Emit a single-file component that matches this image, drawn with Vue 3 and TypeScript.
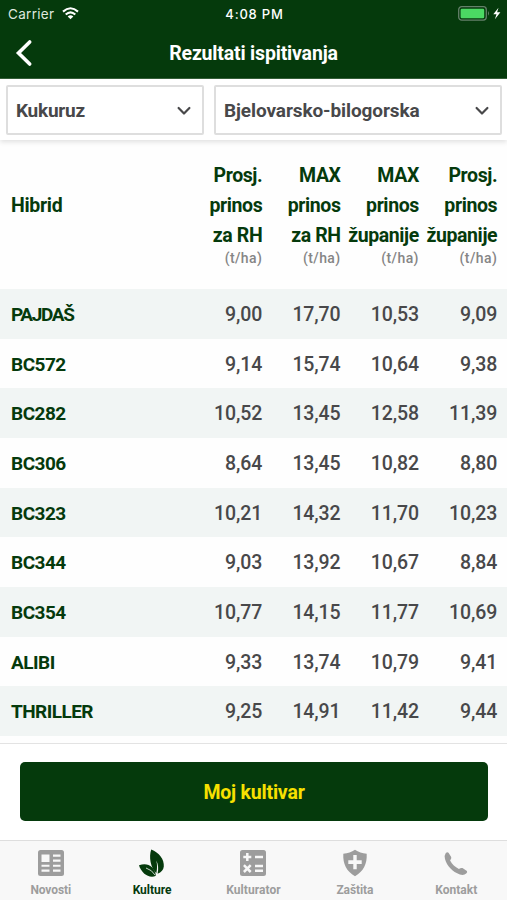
<script setup lang="ts">
interface Column { lines: string[] }
interface Row { name: string; values: string[]; spacing: number }
interface Tab { label: string; icon: string; spacing: number }

const columns: Column[] = [
  { lines: ['Prosj.', 'prinos', 'za RH'] },
  { lines: ['MAX', 'prinos', 'za RH'] },
  { lines: ['MAX', 'prinos', 'županije'] },
  { lines: ['Prosj.', 'prinos', 'županije'] },
]

const rows: Row[] = [
  { name: 'PAJDAŠ', values: ['9,00', '17,70', '10,53', '9,09'], spacing: -1.35 },
  { name: 'BC572', values: ['9,14', '15,74', '10,64', '9,38'], spacing: -0.5 },
  { name: 'BC282', values: ['10,52', '13,45', '12,58', '11,39'], spacing: -0.5 },
  { name: 'BC306', values: ['8,64', '13,45', '10,82', '8,80'], spacing: -0.5 },
  { name: 'BC323', values: ['10,21', '14,32', '11,70', '10,23'], spacing: -0.5 },
  { name: 'BC344', values: ['9,03', '13,92', '10,67', '8,84'], spacing: -0.5 },
  { name: 'BC354', values: ['10,77', '14,15', '11,77', '10,69'], spacing: -0.5 },
  { name: 'ALIBI', values: ['9,33', '13,74', '10,79', '9,41'], spacing: -0.5 },
  { name: 'THRILLER', values: ['9,25', '14,91', '11,42', '9,44'], spacing: -0.55 },
]

const tabs: Tab[] = [
  { label: 'Novosti', icon: 'news', spacing: -0.1 },
  { label: 'Kulture', icon: 'leaf', spacing: 0 },
  { label: 'Kulturator', icon: 'calc', spacing: 0.05 },
  { label: 'Zaštita', icon: 'shield', spacing: -0.1 },
  { label: 'Kontakt', icon: 'phone', spacing: 0 },
]
</script>

<template>
  <div class="app">
    <header class="top">
      <div class="status">
        <div class="carrier">
          <span>Carrier</span>
          <svg width="17" height="13" viewBox="0 0 17 13">
            <g fill="none" stroke="#fff" stroke-width="2.1">
              <path d="M1 4.600Q8.500 -2.100 16 4.600" />
              <path d="M3.700 7.500Q8.500 3.100 13.300 7.500" />
            </g>
            <path d="M5.700 9.400Q8.500 7.100 11.300 9.400L8.500 12.300z" fill="#fff" />
          </svg>
        </div>
        <span class="clock">4:08 PM</span>
        <svg class="battery" width="43" height="15" viewBox="0 0 43 15">
          <rect x=".7" y=".7" width="27.600" height="13.400" rx="3" fill="none" stroke="#64806a" stroke-width="1.300" />
          <rect x="2.600" y="2.700" width="23.600" height="9.500" rx="1.300" fill="#4bd963" />
          <path d="M30 5q2 2.400 0 4.800z" fill="#64806a" />
          <path d="M40.500 1.700L35.300 8.300h3.200L36.900 13.300l5.500-7h-3.300z" fill="#fff" />
        </svg>
      </div>
      <div class="nav">
        <svg class="back" width="18" height="28" viewBox="0 0 18 28">
          <path d="M14.700 3L3.500 14l11.200 11" fill="none" stroke="#fff" stroke-width="3.600" stroke-linecap="round" />
        </svg>
        <h1>Rezultati ispitivanja</h1>
      </div>
    </header>

    <div class="filters">
      <div class="select crop">
        <span>Kukuruz</span>
        <svg width="14" height="10" viewBox="0 0 14 10"><path d="M1.600 2l5.400 5.500L12.400 2" /></svg>
      </div>
      <div class="select county">
        <span>Bjelovarsko-bilogorska</span>
        <svg width="14" height="10" viewBox="0 0 14 10"><path d="M1.600 2l5.400 5.500L12.400 2" /></svg>
      </div>
    </div>

    <main class="table">
      <div class="head">
        <div class="hybrid">Hibrid</div>
        <div v-for="(c, i) in columns" :key="i" class="col">
          <span v-for="l in c.lines" :key="l">{{ l }}</span>
          <small>(t/ha)</small>
        </div>
      </div>
      <div v-for="r in rows" :key="r.name" class="row">
        <div class="name" :style="{ letterSpacing: r.spacing + 'px' }">{{ r.name }}</div>
        <div v-for="(v, i) in r.values" :key="i" class="value">{{ v }}</div>
      </div>
    </main>

    <section class="action">
      <button type="button">Moj kultivar</button>
    </section>

    <nav class="tabs">
      <div v-for="t in tabs" :key="t.label" class="tab" :class="{ active: t.icon === 'leaf' }">
        <svg v-if="t.icon === 'news'" width="28" height="28" viewBox="0 0 28 28">
          <rect x="1" y="1" width="26" height="26" rx="2.500" fill="currentColor" />
          <path d="M4.500 5.500h8v7.500h-8zM16 5.500h7.500v2.200H16zM16 10.500h7.500v2.200H16zM4.500 15.700h8v2.100h-8zM16 15.700h7.500v2.100H16zM4.500 20.600h8v2.100h-8zM16 20.600h7.500v2.100H16z" fill="#f8f8f8" />
        </svg>
        <svg v-else-if="t.icon === 'leaf'" width="28" height="28" viewBox="0 0 28 28">
          <path d="M13.200 .500C21 3.500 26.500 10.500 25.800 17.500Q25.300 22.500 19.600 24.800C20.700 19.500 20.300 15.500 18.300 11.500C19.400 16 19.300 20 18.300 24.200C12.500 18.500 10.700 8 13.200 .500z" fill="currentColor" />
          <path d="M1 16.200C9.500 13.200 16.500 17 18 26.800C11 29.800 3.500 24.500 1 16.200z" fill="currentColor" />
          <path d="M8 19Q14 20.800 17.300 26.300" fill="none" stroke="#f8f8f8" stroke-width=".8" />
        </svg>
        <svg v-else-if="t.icon === 'calc'" width="28" height="28" viewBox="0 0 28 28">
          <rect x="1" y="1" width="26" height="26" rx="2.500" fill="currentColor" />
          <g fill="none" stroke="#f8f8f8" stroke-width="2.500">
            <path d="M4.300 8h8M8.300 4v8M4.900 16.200l6.800 6.800M11.700 16.200l-6.800 6.800M16 8h8M16 17h8M16 21.700h8" />
          </g>
        </svg>
        <svg v-else-if="t.icon === 'shield'" width="28" height="28" viewBox="0 0 28 28">
          <path d="M14 .8Q19 4.300 25.700 4.800C26.200 15 22.500 22.500 14 27.200C5.500 22.500 1.800 15 2.300 4.800Q9 4.300 14 .8z" fill="currentColor" />
          <path d="M12.300 6h3.400v5.300h5v3.600h-5v5.300h-3.400v-5.300h-5v-3.600h5z" fill="#f8f8f8" />
        </svg>
        <svg v-else width="28" height="28" viewBox="0 0 28 28">
          <path d="M3.800 4Q5.300 2.600 6.500 3.700L9.200 8.100Q9.800 9.600 8.100 11.500C10.200 15.300 13 18 16.900 20Q18.800 18.500 20.500 19L24.900 21.900Q25.800 22.900 24.200 24.500Q22 26.600 17.900 25.500C10.500 22.700 4.800 17 3 10Q2.200 6 3.800 4z" fill="currentColor" />
        </svg>
        <span :style="{ letterSpacing: t.spacing + 'px' }">{{ t.label }}</span>
      </div>
    </nav>
  </div>
</template>

<style>
body { margin: 0; background: #fff; }
</style>

<style scoped>
* { box-sizing: border-box; }
.app { width: 507px; height: 900px; display: flex; flex-direction: column; background: #fefefe; font-family: Roboto, "Noto Sans", sans-serif; color: #48484a; overflow: hidden; }
.top { height: 79px; flex: none; background: #053a0c; color: #fff; border-bottom: 1px solid #36603a; }
.status { height: 27px; display: grid; grid-template-columns: 1fr auto 1fr; align-items: center; padding: 0 6px 0 8px; font-family: Inter, sans-serif; font-size: 13px; }
.carrier { display: flex; align-items: center; gap: 8px; font-size: 13.500px; color: #dfe8df; letter-spacing: .3px; }
.clock { font-weight: 500; letter-spacing: .8px; }
.battery { justify-self: end; }
.nav { height: 51px; display: grid; grid-template-columns: 60px 1fr 60px; align-items: center; }
.back { margin-left: 15px; }
h1 { margin: 1px 0 0; text-align: center; font-size: 19.500px; font-weight: 700; letter-spacing: -.18px; white-space: nowrap; }
.filters { flex: none; height: 61px; display: flex; gap: 10px; padding: 6px 5px 5px 6px; background: #fff; box-shadow: 0 2px 5px rgba(0, 0, 0, .12); }
.select { height: 50px; display: flex; align-items: center; justify-content: space-between; border: 2px solid #dedede; border-radius: 2px; padding: 0 11px 0 8px; font-size: 19px; font-weight: 700; }
.select svg { fill: none; stroke: #48484a; stroke-width: 2.200; stroke-linecap: round; stroke-linejoin: round; margin-top: 2px; }
.crop { width: 198px; letter-spacing: -.25px; }
.county { width: 288px; letter-spacing: -.1px; }
.table { flex: none; height: 596px; }
.head, .row { display: grid; grid-template-columns: 173px repeat(4, 78.300px); padding-left: 11px; }
.head { height: 149px; align-items: start; padding-top: 21px; color: #053a0c; font-size: 19.500px; font-weight: 700; }
.hybrid { line-height: 30px; padding-top: 30px; letter-spacing: -.3px; }
.col { display: flex; flex-direction: column; align-items: flex-end; line-height: 29.800px; white-space: nowrap; letter-spacing: -.4px; }
small { font-size: 14px; line-height: 17px; font-weight: 500; color: #858585; letter-spacing: .4px; }
.row { height: 49.670px; align-items: center; font-size: 19.500px; padding-top: 1.600px; }
.row:nth-child(even) { background: #f1f5f4; }
.name { font-size: 19px; font-weight: 700; color: #053a0c; }
.value { text-align: right; font-weight: 500; letter-spacing: -.1px; }
.action { flex: none; height: 97px; margin-top: 7px; border-top: 1px solid #e3e3e3; padding: 18px 19px 20px 20px; background: #fff; }
button { display: block; width: 468px; height: 59px; border: 0; border-radius: 5px; background: #053a0c; color: #f7e000; font: 700 19.500px Roboto, sans-serif; letter-spacing: -.2px; padding: 1px 0 0; }
.tabs { flex: none; height: 60px; border-top: 1px solid #dedede; background: #f8f8f8; display: grid; grid-template-columns: repeat(5, 1fr); }
.tab { display: flex; flex-direction: column; align-items: center; padding-top: 8px; color: #9d9d9d; font-size: 12px; font-weight: 700; line-height: 27px; }
.active { color: #053a0c; }
</style>
